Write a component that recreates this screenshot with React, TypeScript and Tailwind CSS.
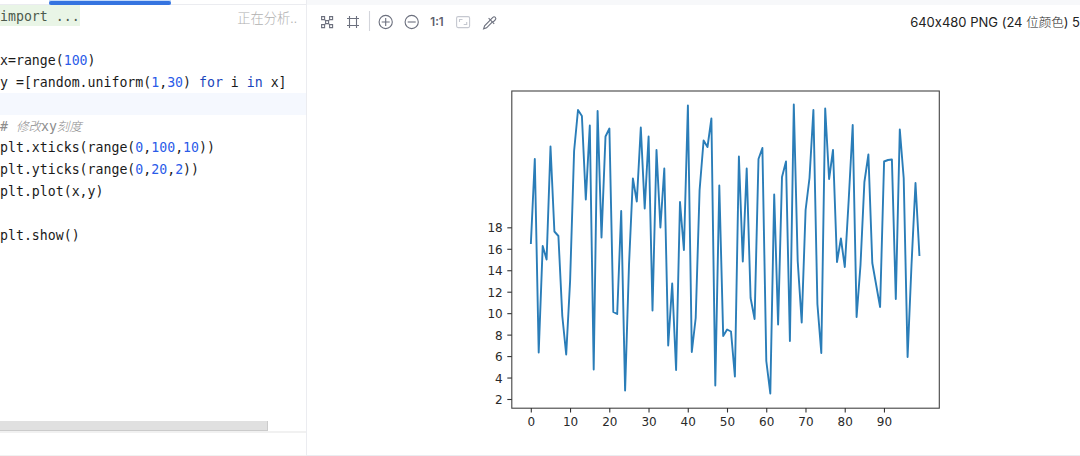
import type { ReactNode } from "react";

const MONO = "font-['DejaVu_Sans_Mono','Noto_Sans_CJK_SC',monospace]";

// y position of every sample, in svg pixels
const SAMPLES = [
  243, 159, 352.5, 246, 259.5, 146.5, 231.5, 236, 316, 354.5,
  281, 151, 110, 116, 199.5, 125.5, 369.5, 111, 237.5, 136.5,
  128.5, 312, 314, 211, 390.5, 265, 178.5, 201.5, 127.5, 208.5,
  136.5, 310.5, 150, 227.5, 168.5, 345.5, 283.5, 370, 202, 250,
  105.5, 352, 318, 190, 140.5, 147, 118.5, 385.5, 185.5, 336,
  329.5, 331.5, 376.5, 156.5, 261.5, 168.5, 298, 319, 159, 148,
  361, 393.5, 194.5, 324.5, 177, 161.5, 341, 104.5, 261, 322.5,
  210, 178, 110, 304, 353, 108.5, 179, 150, 262, 238.5,
  267, 200, 125, 317, 265, 182, 154.5, 263, 285, 307,
  161.5, 160, 159.5, 299, 129.5, 178, 357, 265, 183, 255,
];

const X_TICKS = [0, 10, 20, 30, 40, 50, 60, 70, 80, 90];
const Y_TICKS = [2, 4, 6, 8, 10, 12, 14, 16, 18];

const xOf = (i: number) => 50.9 + i * 3.924;
const yOf = (v: number) => 377.5 - (v - 2) * 10.73;

function Chart() {
  const points = SAMPLES.map((y, i) => `${xOf(i).toFixed(1)},${y - 22}`).join(" ");
  return (
    <svg
      width="480"
      height="412"
      viewBox="0 0 480 412"
      className="block font-['DejaVu_Sans',sans-serif] text-[12px]"
    >
      <polyline
        points={points}
        fill="none"
        stroke="#2a7db8"
        strokeWidth="1.9"
        strokeLinejoin="round"
        strokeLinecap="square"
      />
      <rect x="31.8" y="69" width="427.5" height="317.2" fill="none" stroke="#444" strokeWidth="1.1" />
      {X_TICKS.map((v) => (
        <g key={v}>
          <path d={`M${xOf(v) + 0.4} 386v4.5`} stroke="#333" strokeWidth="1.1" />
          <text x={xOf(v) + 0.4} y="404" textAnchor="middle" fill="#2a2a2a">
            {v}
          </text>
        </g>
      ))}
      {Y_TICKS.map((v) => (
        <g key={v}>
          <path d={`M27.3 ${yOf(v)}h4.5`} stroke="#333" strokeWidth="1.1" />
          <text x="22.7" y={yOf(v) + 4.6} textAnchor="end" fill="#2a2a2a">
            {v}
          </text>
        </g>
      ))}
    </svg>
  );
}

function Line({ children, active = false }: { children?: ReactNode; active?: boolean }) {
  return (
    <div className={`flex h-[21.9px] items-center whitespace-pre pt-[2px] ${active ? "bg-[#f5f8fe]" : ""}`}>
      <span>{children}</span>
    </div>
  );
}

const Num = ({ children }: { children: ReactNode }) => <span className="text-[#2a5be8]">{children}</span>;
const Key = ({ children }: { children: ReactNode }) => <span className="text-[#1a45bb]">{children}</span>;

function Editor() {
  return (
    <div className="flex w-[307px] shrink-0 flex-col border-r border-[#ebecf0]">
      {/* active tab underline */}
      <div className="h-[5px] border-b border-[#ebecf0]">
        <div className="ml-[49px] h-[5px] w-[122px] bg-[#c3dafb] pt-px">
          <div className="h-1 rounded-full bg-[#3574e0]" />
        </div>
      </div>
      <div className={`grow text-[13.22px] text-[#1a1a1a] ${MONO}`}>
        <div className="flex h-[22px] justify-between">
          <div className="h-[21px] w-20 bg-[#e9f5e6] leading-[23px] text-[#4c5a4c]">import ...</div>
          <div className="mr-[9px] mt-[2px] font-['Noto_Sans_CJK_SC',sans-serif] text-[13.3px] font-light leading-[22px] text-[#b0b0b0]">
            正在分析..
          </div>
        </div>
        <Line />
        <Line>x=range(<Num>100</Num>)</Line>
        <Line>
          y =[random.uniform(<Num>1</Num>,<Num>30</Num>) <Key>for</Key> i <Key>in</Key> x]
        </Line>
        <Line active />
        <Line>
          <span className="text-[#8c8c8c]">
            # <span className="text-[12.5px] font-light italic">修改</span>xy
            <span className="text-[12.5px] font-light italic">刻度</span>
          </span>
        </Line>
        <Line>
          plt.xticks(range(<Num>0</Num>,<Num>100</Num>,<Num>10</Num>))
        </Line>
        <Line>
          plt.yticks(range(<Num>0</Num>,<Num>20</Num>,<Num>2</Num>))
        </Line>
        <Line>plt.plot(x,y)</Line>
        <Line />
        <Line>plt.show()</Line>
      </div>
      {/* horizontal scrollbar */}
      <div className="mb-[22px] border-b-2 border-[#f1f1f1]">
        <div className="h-[10px] w-[268px] border-b border-r border-[#cbcbcb] bg-[#e0e0e0]" />
      </div>
      <div className="h-px bg-[#f1f1f1]" />
    </div>
  );
}

function Toolbar() {
  return (
    <div className="flex h-[34px] items-center justify-between pl-[13px]">
      <svg width="184" height="24" viewBox="0 0 184 24" fill="none" stroke="#6c707e" strokeWidth="1.1">
        {/* checkerboard */}
        <path d="M1.6 6.6h3v3h-3zM9.6 6.6h3v3h-3zM5.6 10.6h3v3h-3zM1.6 14.6h3v3h-3zM9.6 14.6h3v3h-3zM4.6 9.6l1 1M9.6 9.6l-1 1M4.6 14.6l1-1M9.6 14.6l-1-1" />
        {/* grid */}
        <path d="M29.5 6v12M36.5 6v12M27 8.5h12M27 15.5h12" />
        <path d="M49.5 1v20" stroke="#d3d5db" />
        {/* zoom in / out */}
        <circle cx="65.7" cy="12" r="6.6" />
        <path d="M61.7 12h8M65.7 8v8" />
        <circle cx="91.7" cy="12" r="6.6" />
        <path d="M87.7 12h8" />
        <text
          x="117"
          y="16"
          textAnchor="middle"
          fill="#5a5d6b"
          stroke="none"
          className="font-['Inter',sans-serif] text-[11.5px] font-semibold"
        >
          1:1
        </text>
        {/* fit to window */}
        <g stroke="#c5c8d0">
          <rect x="136.6" y="6.6" width="13" height="11" rx="1.5" />
          <path d="M139.5 12V9.5h3M146.7 12v2.5h-3" />
        </g>
        {/* color picker */}
        <path d="m170.2 10.2-5.6 5.6-1 3 3-1 5.6-5.6" />
        <path d="m168.6 8.2 5.6 5.6M170.4 9.9l2.2-2.3c2-2 4.4.4 2.5 2.4l-2.3 2.3" />
      </svg>
      <div className="mt-px whitespace-nowrap font-['Inter','Noto_Sans_CJK_SC',sans-serif] text-[13px] leading-5 text-[#222] [font-feature-settings:'calt'_0]">
        640x480 PNG (24 <span className="text-[12.5px] font-light">位颜色</span>) 5
      </div>
    </div>
  );
}

export default function App() {
  return (
    <div className="flex h-[456px] w-[1080px] overflow-hidden bg-white">
      <Editor />
      <div className="flex min-w-0 grow flex-col">
        <div className="h-[5px] bg-[#f7f8fa]" />
        <Toolbar />
        <div className="-mt-[17px] ml-[173px]">
          <Chart />
        </div>
        <div className="mt-auto h-px bg-[#ebecf0]" />
      </div>
    </div>
  );
}
